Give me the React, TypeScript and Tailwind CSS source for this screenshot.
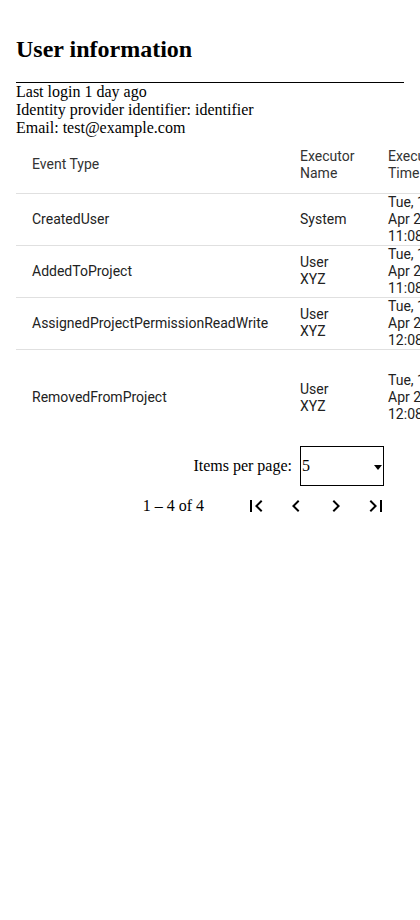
import React from 'react';

interface EventRow {
  type: string;
  executor: string;
  time: string;
  height: string;
}

const rows: EventRow[] = [
  { type: 'CreatedUser', executor: 'System', time: 'Tue, 15 Apr 2025 11:08', height: 'h-[52px]' },
  { type: 'AddedToProject', executor: 'User XYZ', time: 'Tue, 15 Apr 2025 11:08', height: 'h-[52px]' },
  { type: 'AssignedProjectPermissionReadWrite', executor: 'User XYZ', time: 'Tue, 15 Apr 2025 12:08', height: 'h-[52px]' },
  { type: 'RemovedFromProject', executor: 'User XYZ', time: 'Tue, 15 Apr 2025 12:08', height: 'h-[97px]' },
];

// Material icon paths (24x24)
const icons = {
  first: 'M18.41 16.59L13.82 12l4.59-4.59L17 6l-6 6 6 6zM6 6h2v12H6z',
  prev: 'M15.41 7.41L14 6l-6 6 6 6 1.41-1.41L10.83 12z',
  next: 'M10 6L8.59 7.41 13.17 12l-4.58 4.59L10 18l6-6z',
  last: 'M5.59 7.41L10.18 12l-4.59 4.59L7 18l6-6-6-6zM16 6h2v12h-2z',
};

function PageButton({ d }: { d: string }) {
  return (
    <button className="w-10 h-10 flex items-center justify-center">
      <svg width="24" height="24" viewBox="0 0 24 24" fill="#000">
        <path d={d} />
      </svg>
    </button>
  );
}

export default function App() {
  return (
    <div className="w-full min-h-screen overflow-hidden bg-white text-black font-['Liberation_Serif',serif] text-base">
      <div className="px-4 pt-[35px]">
        <h1 className="text-2xl font-bold leading-[28px] mb-[19px]">User information</h1>
        <hr className="border-0 border-t border-black" />
        <div className="leading-[18px]">
          <div>Last login 1 day ago</div>
          <div>Identity provider identifier: identifier</div>
          <div>Email: test@example.com</div>
        </div>

        {/* Events table */}
        <table className="table-fixed border-collapse w-[560px] font-['Roboto',sans-serif] text-sm text-[#222] leading-[17px]">
          <thead>
            <tr className="h-[56px] border-b border-[#e0e0e0]">
              <th className="w-[268px] pl-4 text-left font-normal text-[#333]">Event Type</th>
              <th className="w-[88px] pl-4 pr-2 text-left font-normal text-[#333]">
                <div className="w-min">Executor Name</div>
              </th>
              <th className="w-[86px] pl-4 pr-2 text-left font-normal text-[#333]">Execution Time</th>
              <th className="pl-4 text-left font-normal text-[#333]">Details</th>
            </tr>
          </thead>
          <tbody>
            {rows.map((row, i) => (
              <tr
                key={row.type}
                className={`${row.height} ${i < rows.length - 1 ? 'border-b border-[#e0e0e0]' : ''}`}
              >
                <td className="pl-4 align-middle">{row.type}</td>
                <td className="pl-4 pr-2 align-middle">
                  <div className="w-min">{row.executor}</div>
                </td>
                <td className="pl-4 pr-2 align-middle">{row.time}</td>
                <td className="pl-4 align-middle"></td>
              </tr>
            ))}
          </tbody>
        </table>

        {/* Paginator */}
        <div className="flex flex-col items-end">
          <div className="flex items-center h-10 pr-5">
            <span className="mr-2">Items per page:</span>
            <div className="relative w-[84px] h-10 border border-black flex items-center pl-px">
              <span>5</span>
              <span className="absolute right-[1px] top-[18px] w-0 h-0 border-l-[4px] border-r-[4px] border-t-[5px] border-l-transparent border-r-transparent border-t-black" />
            </div>
          </div>
          <div className="flex items-center pr-2">
            <span className="mr-8">1 – 4 of 4</span>
            <PageButton d={icons.first} />
            <PageButton d={icons.prev} />
            <PageButton d={icons.next} />
            <PageButton d={icons.last} />
          </div>
        </div>
      </div>
    </div>
  );
}
